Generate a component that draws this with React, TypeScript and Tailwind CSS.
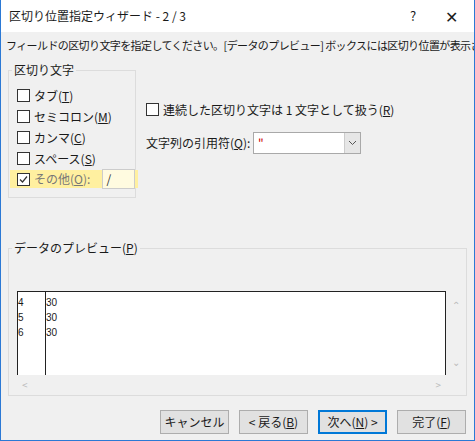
import React from "react";

const font = { fontFamily: '"Noto Sans CJK JP", sans-serif' };

function Box({ checked = false }: { checked?: boolean }) {
  return (
    <span className="w-[13px] h-[13px] border border-[#333] bg-white flex items-center justify-center shrink-0">
      {checked && (
        <svg width="11" height="11" viewBox="0 0 11 11">
          <path d="M2 5.5 L4.5 8 L9 2.5" fill="none" stroke="#333" strokeWidth="1.2" />
        </svg>
      )}
    </span>
  );
}

function Check({ label, k, checked = false }: { label: string; k: string; checked?: boolean }) {
  return (
    <div className="flex items-center gap-[4px] h-[21px]">
      <Box checked={checked} />
      <span>
        {label}(<span className="underline">{k}</span>)
      </span>
    </div>
  );
}

function Btn({ children, primary = false }: { children: React.ReactNode; primary?: boolean }) {
  return (
    <div
      className={`w-[69px] h-[24px] flex items-center justify-center bg-[#e1e1e1] border ${
        primary ? "border-[#0078d7] border-2" : "border-[#adadad]"
      }`}
    >
      {children}
    </div>
  );
}

export default function App() {
  return (
    <div
      className="w-[475px] h-[441px] bg-[#f0f0f0] border-x border-b border-[#2b79d5] text-[12px] text-[#1a1a1a] flex flex-col overflow-hidden"
      style={font}
    >
      <div className="h-[32px] bg-white flex items-center pl-[8px] shrink-0">
        <span className="flex-1 text-[12px]">区切り位置指定ウィザード - 2 / 3</span>
        <span className="w-[30px] text-center text-[13px]">?</span>
        <span className="w-[46px] text-center text-[16px]">✕</span>
      </div>
      <div className="pl-[5px] mt-[5px] h-[16px] leading-[16px] whitespace-nowrap text-[11px] tracking-[-0.6px]">
        フィールドの区切り文字を指定してください。[データのプレビュー] ボックスには区切り位置が表示されます。
      </div>
      <div className="flex mt-[10px] pl-[7px]">
        <div className="relative w-[128px] h-[128px] border border-[#dcdcdc] mt-[7px] pl-[8px] pt-[14px]">
          <span className="absolute -top-[9px] left-[3px] bg-[#f0f0f0] px-[2px] leading-[16px]">区切り文字</span>
          <Check label="タブ" k="T" />
          <Check label="セミコロン" k="M" />
          <Check label="カンマ" k="C" />
          <Check label="スペース" k="S" />
          <div className="-ml-[7px] mt-[1px] w-[128px] h-[18px] bg-[#fff0a0] flex items-center pl-[7px] gap-[4px] text-[#777]">
            <Box checked />
            <span>
              その他(<span className="underline">O</span>):
            </span>
            <span className="ml-[8px] w-[33px] h-[20px] bg-[#fffbe0] border border-[#ccc] pl-[3px] leading-[18px] text-[#333]">/</span>
          </div>
        </div>
        <div className="ml-[10px] pt-[36px]">
          <div className="flex items-center gap-[4px] h-[21px]">
            <Box />
            <span>
              連続した区切り文字は 1 文字として扱う(<span className="underline">R</span>)
            </span>
          </div>
          <div className="flex items-center mt-[12px]">
            <span className="w-[107px]">
              文字列の引用符(<span className="underline">Q</span>):
            </span>
            <div className="w-[108px] h-[22px] bg-white border border-[#a9a9a9] flex">
              <span className="flex-1 pl-[4px] text-[#c00] leading-[20px]">"</span>
              <span className="w-[16px] bg-[#e6e6e6] border-l border-[#ccc] flex items-center justify-center">
                <svg width="9" height="6" viewBox="0 0 9 6">
                  <path d="M1 1 L4.5 4.5 L8 1" fill="none" stroke="#555" />
                </svg>
              </span>
            </div>
          </div>
        </div>
      </div>
      <div className="relative mx-[7px] mt-[50px] h-[148px] border border-[#dcdcdc] pl-[8px] pt-[42px]">
        <span className="absolute -top-[9px] left-[3px] bg-[#f0f0f0] px-[2px] leading-[16px]">
          データのプレビュー(<span className="underline">P</span>)
        </span>
        <div className="flex">
          <div className="w-[429px] h-[84px] bg-white border-x border-t border-[#222] flex text-[10px] leading-[15px]" style={{ fontFamily: '"Liberation Sans", sans-serif' }}>
            <div className="w-[28px] border-r border-[#222] pt-[3px]">
              <div>4</div><div>5</div><div>6</div>
            </div>
            <div className="pt-[3px]">
              <div>30</div><div>30</div><div>30</div>
            </div>
          </div>
          <div className="w-[20px] flex flex-col justify-between items-center text-[#bbb] text-[10px] py-[6px]">
            <span>⌃</span><span>⌄</span>
          </div>
        </div>
        <div className="w-[429px] flex justify-between text-[#bbb] text-[10px] px-[5px] mt-[2px]">
          <span>&lt;</span><span>&gt;</span>
        </div>
      </div>
      <div className="flex justify-end gap-[10px] pr-[8px] mt-[14px]">
        <Btn>キャンセル</Btn>
        <Btn>
          &lt; 戻る(<span className="underline">B</span>)
        </Btn>
        <Btn primary>
          次へ(<span className="underline">N</span>) &gt;
        </Btn>
        <Btn>
          完了(<span className="underline">F</span>)
        </Btn>
      </div>
    </div>
  );
}
